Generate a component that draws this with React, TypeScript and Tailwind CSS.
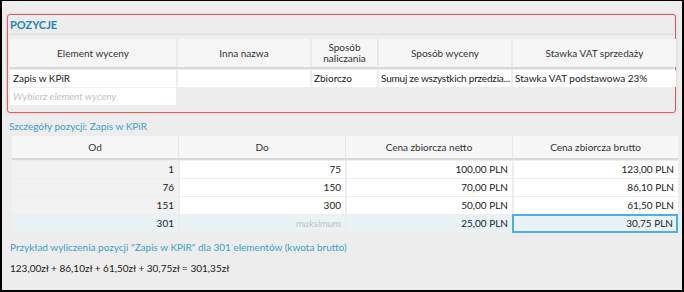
import React from 'react';

// ==============================
// DATA
// ==============================

const ranges = [
  { od: '1', do: '75', netto: '100,00 PLN', brutto: '123,00 PLN' },
  { od: '76', do: '150', netto: '70,00 PLN', brutto: '86,10 PLN' },
  { od: '151', do: '300', netto: '50,00 PLN', brutto: '61,50 PLN' },
  { od: '301', do: '', netto: '25,00 PLN', brutto: '30,75 PLN' },
];

// ==============================
// COMPONENT
// ==============================

export default function App() {
  return (
    <div
      className="w-[684px] h-[292px] bg-[#ededed] border-l-2 border-r-2 border-b-2 border-t border-black text-[#222] overflow-hidden"
      style={{ fontFamily: 'Lato, "Open Sans", sans-serif' }}
    >
      <div className="pl-[5px] pr-[6px] pt-[13px]">
        {/* Pozycje panel */}
        <div className="border border-[#e8595b] rounded-[3px] shadow-[0_0_3px_rgba(0,0,0,0.15)] pb-[7px]">
          <div className="h-[20px] pl-[2px] pt-[2px] text-[11px] font-bold text-[#1b86bb] leading-[16px] border-b-2 border-[#e2e2e2]">
            POZYCJE
          </div>
          <div className="px-[2px] pt-[4px]">
            <div className="grid grid-cols-[166px_132px_65px_132px_163px] gap-x-[2px] bg-[#e9e9e9] border-b-2 border-[#d9d9d9] text-[10px] text-[#333] h-[30px]">
              <div className="flex items-center justify-center bg-[#f6f6f6]">Element wyceny</div>
              <div className="flex items-center justify-center bg-[#f6f6f6]">Inna nazwa</div>
              <div className="flex items-center justify-center text-center leading-[11px] bg-[#f6f6f6]">
                Sposób
                <br />
                naliczania
              </div>
              <div className="flex items-center justify-center bg-[#f6f6f6]">Sposób wyceny</div>
              <div className="flex items-center justify-center bg-[#f6f6f6]">Stawka VAT sprzedaży</div>
            </div>
            <div className="grid grid-cols-[166px_132px_65px_132px_163px] gap-x-[2px] text-[10px] mt-[1px] h-[17px] leading-[17px]">
              <div className="bg-white px-[3px]">Zapis w KPiR</div>
              <div className="bg-white"></div>
              <div className="bg-white px-[2px]">Zbiorczo</div>
              <div className="bg-white px-[2px] whitespace-nowrap overflow-hidden tracking-[-0.2px]">Sumuj ze wszystkich przedzia...</div>
              <div className="bg-white px-[2px] whitespace-nowrap">Stawka VAT podstawowa 23%</div>
            </div>
            <div className="w-[166px] bg-white h-[17px] px-[3px] leading-[17px] mt-[1px] text-[10px] italic text-[#c4c4c4]">
              Wybierz element wyceny
            </div>
          </div>
        </div>

        {/* Szczegóły pozycji */}
        <div className="mt-[6px] pl-[2px] text-[10px] text-[#3a9fce] leading-[14px]">Szczegóły pozycji: Zapis w KPiR</div>
        <div className="mt-[3px] ml-[5px] w-[666px] text-[10px]">
          <div className="grid grid-cols-[166px_167px_167px_166px] bg-[#f7f7f7] border-b-2 border-[#d9d9d9] h-[24px] text-[#333]">
            <div className="flex items-center justify-center">Od</div>
            <div className="flex items-center justify-center border-l border-[#e6e6e6]">Do</div>
            <div className="flex items-center justify-center border-l border-[#e6e6e6]">Cena zbiorcza netto</div>
            <div className="flex items-center justify-center border-l border-[#e6e6e6]">Cena zbiorcza brutto</div>
          </div>
          {ranges.map((r, i) => {
            const last = i === ranges.length - 1;
            return (
              <div
                key={r.od}
                className={
                  last
                    ? 'grid grid-cols-[166px_167px_167px_166px] mt-[1px] h-[17px] leading-[17px] bg-[#e9f3f7]'
                    : 'grid grid-cols-[166px_167px_167px_166px] mt-[1px] h-[17px] leading-[17px]'
                }
              >
                <div className={last ? 'text-right pr-[4px]' : 'bg-[#f2f2f2] text-right pr-[4px]'}>{r.od}</div>
                <div
                  className={
                    last
                      ? 'text-right pr-[4px] italic text-[#c2c2c2] border-l-2 border-[#ededed]'
                      : 'bg-white text-right pr-[4px] border-l-2 border-[#ededed]'
                  }
                >
                  {last ? 'maksimum' : r.do}
                </div>
                <div className={last ? 'text-right pr-[4px] border-l-2 border-[#ededed]' : 'bg-white text-right pr-[4px] border-l-2 border-[#ededed]'}>
                  {r.netto}
                </div>
                <div
                  className={
                    last
                      ? 'text-right pr-[3px] leading-[15px] border-2 border-[#48b1e2] -mt-[1px] h-[19px]'
                      : 'bg-white text-right pr-[4px] border-l-2 border-[#ededed]'
                  }
                >
                  {r.brutto}
                </div>
              </div>
            );
          })}
        </div>

        {/* Przykład */}
        <div className="mt-[8px] pl-[3px] text-[10px] text-[#3a9fce] leading-[14px]">
          Przykład wyliczenia pozycji "Zapis w KPiR" dla 301 elementów (kwota brutto)
        </div>
        <div className="mt-[7px] pl-[3px] text-[10px] text-[#222] leading-[14px]">
          123,00zł + 86,10zł + 61,50zł + 30,75zł = 301,35zł
        </div>
      </div>
    </div>
  );
}
